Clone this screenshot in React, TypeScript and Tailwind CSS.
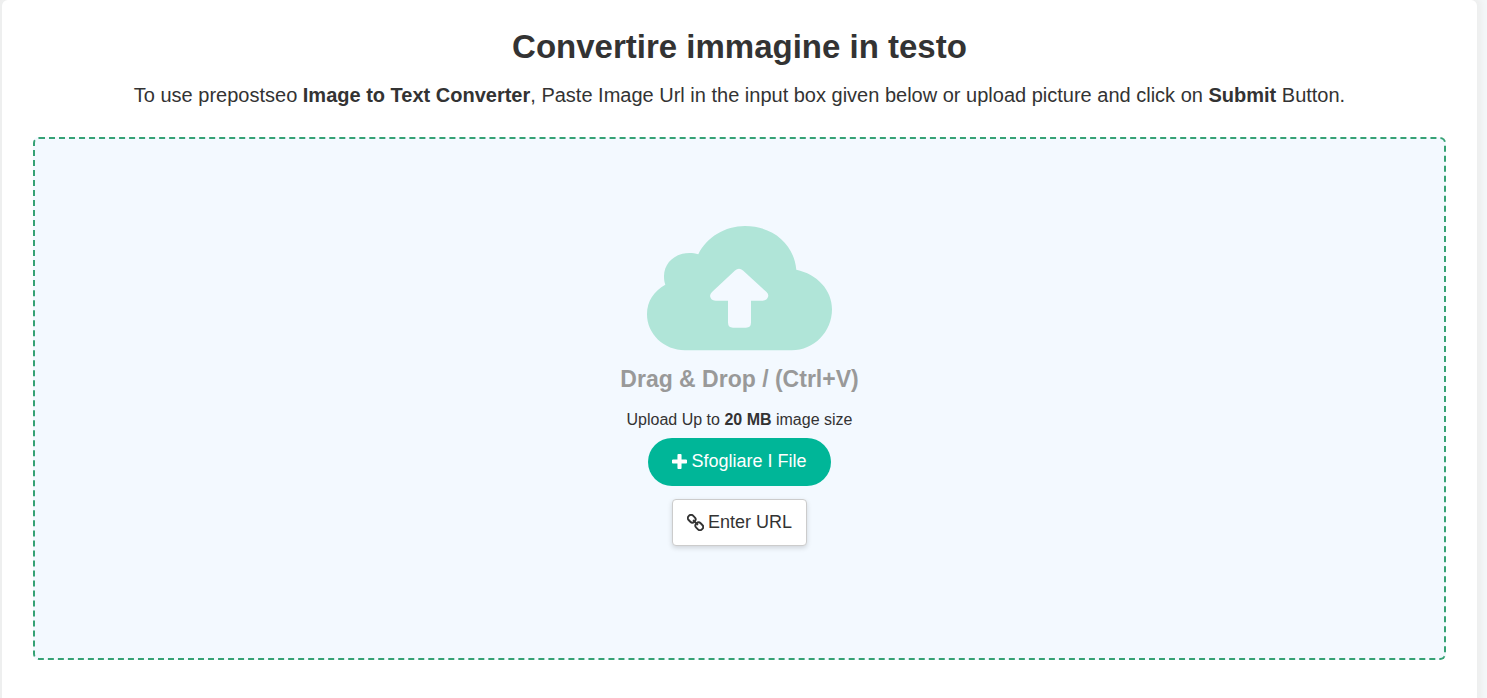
function CloudUploadIcon() {
  return (
    <svg viewBox="0 0 185 125" className="h-[125px] w-[185px]" fill="#b0e5d8" aria-hidden="true">
      <path
        fillRule="evenodd"
        d="M18.3 58.7C17.3 56 17 53 17 50C17 37 28 27 42.3 27C45.5 27 48.5 27.3 51.3 28.2C60 11 78 0 98 0C126 0 147 18 149.3 43.7C170 48 185 64 185 83.3C185 106 167 124.3 144.7 124.3H38C17 124.3 0 108 0 88.3C0 75 7 65 18.3 58.7ZM88 44.5Q92 41.2 96 44.5L119.5 66Q122.5 69 120.5 72Q119 74.7 115 74.7H104V96.5Q104 101.7 99 101.7H86Q81 101.7 81 96.5V74.7H69Q65 74.7 63.7 72Q62 69 65 66Z"
      />
    </svg>
  );
}

function PlusIcon() {
  return (
    <svg viewBox="192 128 1408 1408" className="h-[15px] w-[15px]" fill="currentColor" aria-hidden="true">
      <path d="M1600 736v192q0 40-28 68t-68 28h-416v416q0 40-28 68t-68 28h-192q-40 0-68-28t-28-68v-416h-416q-40 0-68-28t-28-68v-192q0-40 28-68t68-28h416v-416q0-40 28-68t68-28h192q40 0 68 28t28 68v416h416q40 0 68 28t28 68z" />
    </svg>
  );
}

function LinkIcon() {
  return (
    <svg
      viewBox="0 0 17 17"
      className="h-[17px] w-[17px]"
      fill="none"
      stroke="currentColor"
      strokeWidth="1.9"
      strokeLinecap="round"
      aria-hidden="true"
    >
      <rect x="0.7" y="1.6" width="8" height="6.2" rx="2.8" transform="rotate(45 4.7 4.7)" />
      <rect x="8.3" y="9.2" width="8" height="6.2" rx="2.8" transform="rotate(45 12.3 12.3)" />
      <path d="M6.6 6.6L10.4 10.4" />
    </svg>
  );
}

export default function App() {
  return (
    <div className="min-h-screen bg-[#f4f7f8] font-['Liberation_Sans',Arial,sans-serif] text-[#333333]">
      <div className="min-h-screen border-l-2 border-[#efefef] pr-[10px]">
        <main className="min-h-screen rounded-t-md bg-white px-[31px] pt-[27px] pb-[38px] shadow-[0_0_5px_5px_#eeefef]">
          <h1 className="text-center text-[33px] leading-10 font-bold">Convertire immagine in testo</h1>
          <p className="mt-[13px] text-center text-[20px] leading-[30px]">
            To use prepostseo <strong>Image to Text Converter</strong>, Paste Image Url in the input box given below or
            upload picture and click on <strong>Submit</strong> Button.
          </p>

          {/* Drop area */}
          <section className="mt-[27px] flex flex-col items-center rounded-md border-2 border-dashed border-[#36a275] bg-[#f3f9ff] pt-[87px] pb-28">
            <CloudUploadIcon />
            <h2 className="mt-3 text-[23px] leading-8 font-bold text-[#999999]">Drag &amp; Drop / (Ctrl+V)</h2>
            <p className="mt-[13px] text-base leading-6">
              Upload Up to <strong>20 MB</strong> image size
            </p>
            <button
              type="button"
              className="mt-[6px] flex h-12 items-center gap-1 rounded-full bg-[#00b698] px-6 pb-[2px] text-[18px] text-white"
            >
              <PlusIcon />
              Sfogliare I File
            </button>
            <button
              type="button"
              className="mt-[13px] flex h-[47px] items-center gap-1 rounded border border-[#cccccc] bg-white px-[14px] pb-px text-[18px] shadow-[0_2px_5px_rgba(0,0,0,0.15)]"
            >
              <LinkIcon />
              Enter URL
            </button>
          </section>
        </main>
      </div>
    </div>
  );
}
